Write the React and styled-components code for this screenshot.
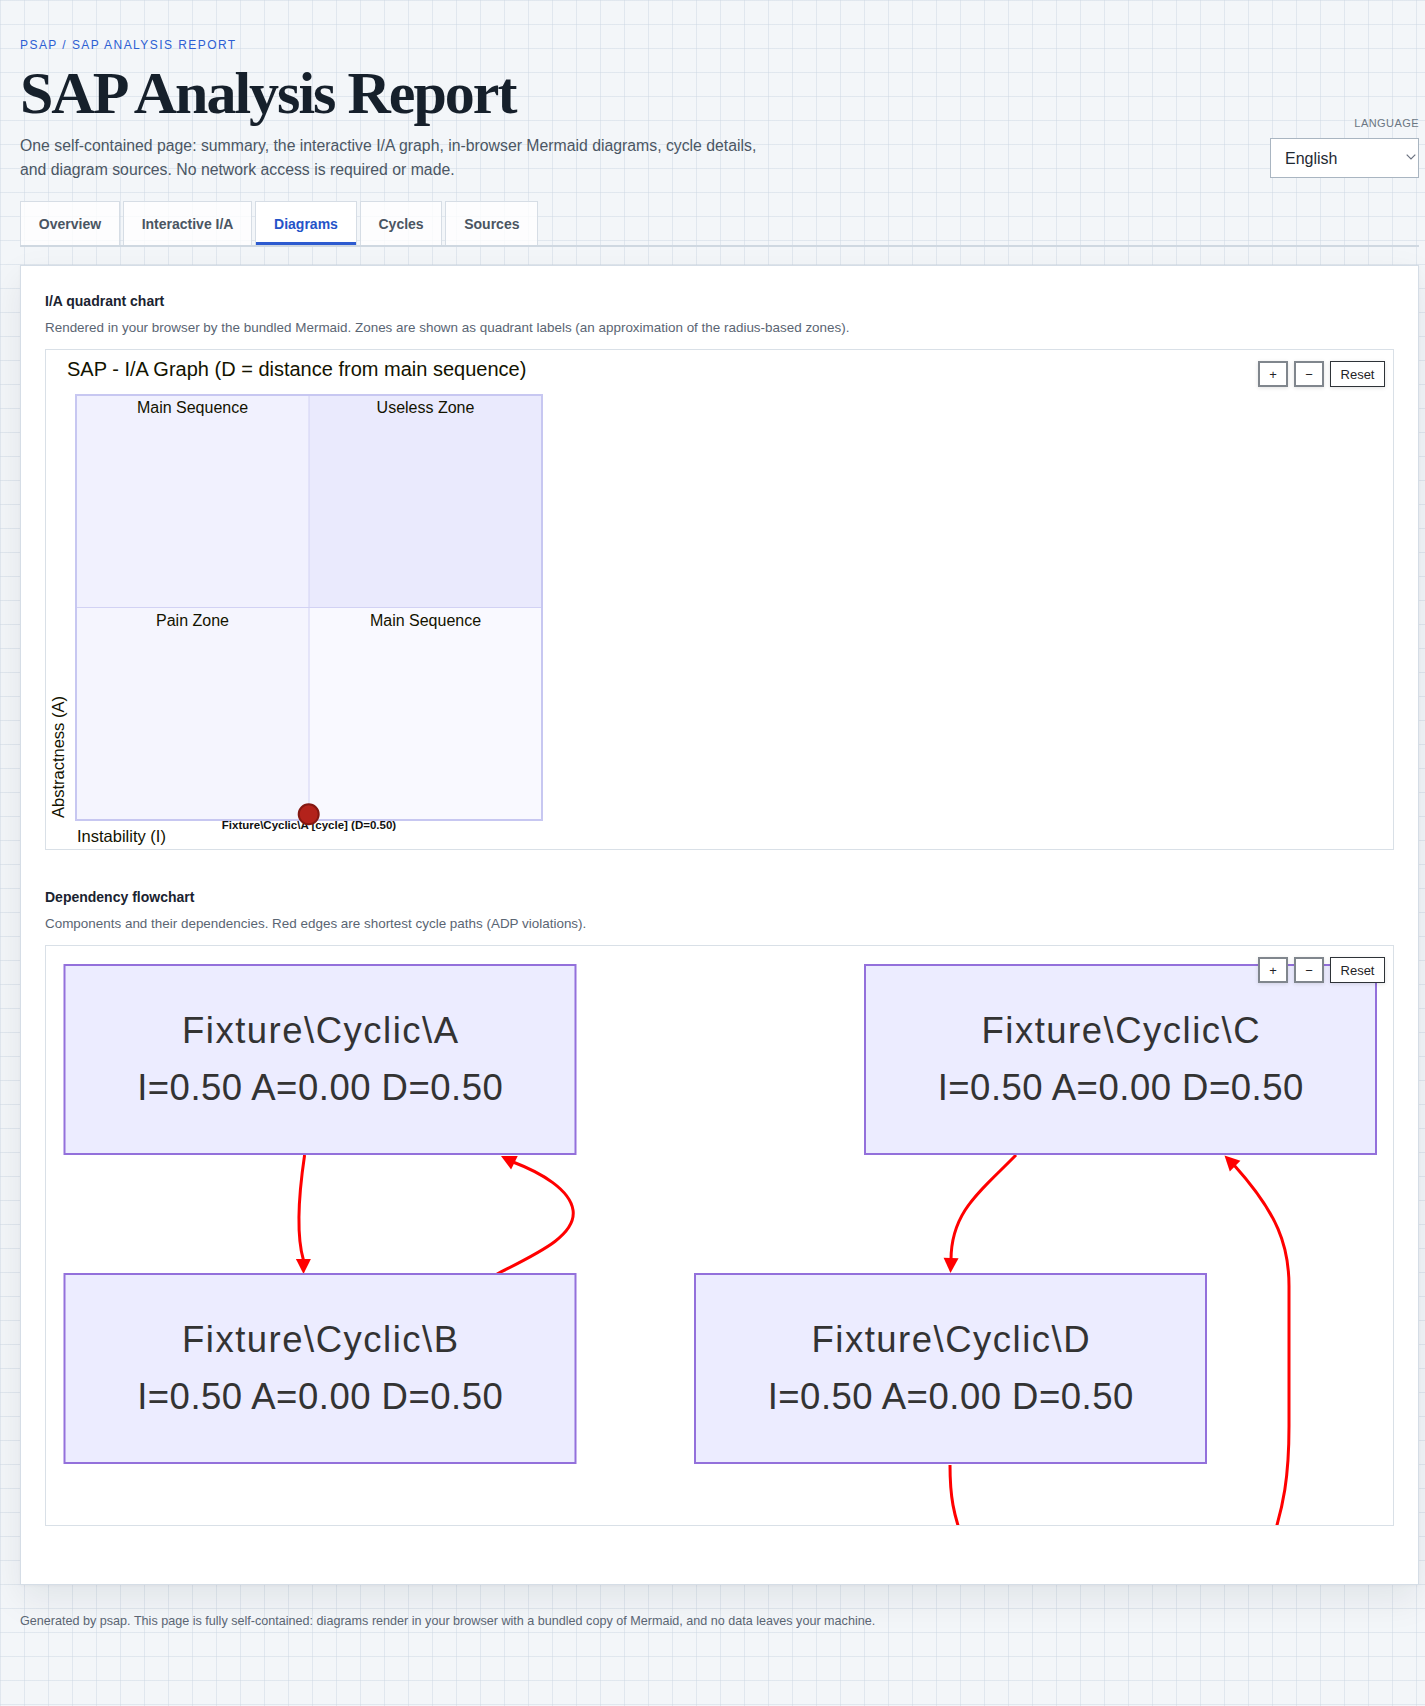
import React from 'react';
import styled, { createGlobalStyle } from 'styled-components';

const SANS = '"Liberation Sans", Arial, Helvetica, sans-serif';
const SERIF = '"Liberation Serif", "Times New Roman", serif';

const GlobalStyle = createGlobalStyle`
  *, *::before, *::after { box-sizing: border-box; }
  html, body { margin: 0; padding: 0; }
  body {
    min-height: 100vh;
    background-color: #f3f6f9;
    background-image:
      linear-gradient(to right, rgba(203, 213, 225, 0.45) 1px, transparent 1px),
      linear-gradient(to bottom, rgba(203, 213, 225, 0.45) 1px, transparent 1px);
    background-size: 24px 24px;
    font-family: ${SANS};
    color: #1b2430;
  }
`;

const Page = styled.div`
  padding: 36px 6px 60px 20px;
`;

const Header = styled.header`
  display: flex;
  justify-content: space-between;
  align-items: flex-end;
  gap: 24px;
`;

const HeaderText = styled.div`
  display: flex;
  flex-direction: column;
`;

const Breadcrumb = styled.div`
  font-size: 12px;
  line-height: 18px;
  letter-spacing: 0.12em;
  text-transform: uppercase;
  color: #2d5fd3;
`;

const Title = styled.h1`
  margin: 6px 0 0;
  font-family: ${SERIF};
  font-weight: 700;
  font-size: 60px;
  line-height: 66px;
  letter-spacing: -2px;
  color: #16202b;
`;

const Subtitle = styled.p`
  margin: 8px 0 0;
  max-width: 762px;
  font-size: 15.8px;
  line-height: 23.5px;
  color: #4b5664;
`;

const LangBlock = styled.div`
  display: flex;
  flex-direction: column;
  align-items: flex-end;
  gap: 8px;
  margin-bottom: 3px;
`;

const LangLabel = styled.label`
  font-size: 11px;
  line-height: 14px;
  letter-spacing: 0.04em;
  text-transform: uppercase;
  color: #6b7683;
`;

const SelectWrap = styled.div`
  position: relative;
  width: 149px;
  height: 40px;
`;

const Select = styled.select`
  appearance: none;
  -webkit-appearance: none;
  width: 100%;
  height: 100%;
  margin: 0;
  padding: 0 20px 0 14px;
  border: 1px solid #a9b5c1;
  border-radius: 0;
  background: #fff;
  font-family: ${SANS};
  font-size: 16px;
  color: #1f2933;
  outline: none;
`;

const Chevron = styled.svg`
  position: absolute;
  right: 3px;
  top: 16px;
  pointer-events: none;
`;

const TabBar = styled.nav`
  display: flex;
  gap: 3px;
  margin-top: 20px;
  border-bottom: 2px solid #cfd8e1;
`;

const Tab = styled.button`
  display: flex;
  align-items: center;
  height: 44px;
  padding: 0 17.8px;
  margin: 0;
  border: 1px solid #d6dde5;
  border-bottom: none;
  border-radius: 0;
  background: ${(p) => (p.$active ? '#ffffff' : 'rgba(255, 255, 255, 0.78)')};
  box-shadow: ${(p) => (p.$active ? 'inset 0 -3px 0 #2d5bd0' : 'none')};
  color: ${(p) => (p.$active ? '#2453c8' : '#4a5562')};
  font-family: ${SANS};
  font-weight: 700;
  font-size: 14px;
  cursor: pointer;
`;

const Card = styled.main`
  margin-top: 18px;
  background: #ffffff;
  border: 1px solid #d5dde6;
  padding: 25px 24px 58px;
  box-shadow: 0 14px 34px rgba(15, 23, 42, 0.08), 0 1px 3px rgba(15, 23, 42, 0.04);
`;

const Section = styled.section`
  & + & {
    margin-top: 37px;
  }
`;

const SectionTitle = styled.h2`
  margin: 0;
  font-size: 14px;
  line-height: 20px;
  font-weight: 700;
  color: #1a2330;
`;

const SectionDesc = styled.p`
  margin: 8px 0 13px;
  font-size: 13.45px;
  line-height: 17px;
  color: #5a6573;
`;

const Frame = styled.div`
  position: relative;
  height: ${(p) => p.$h}px;
  border: 1px solid #d9e0e7;
  background: #ffffff;
  overflow: hidden;
`;

const ZoomControls = styled.div`
  position: absolute;
  top: 11px;
  right: 8px;
  z-index: 2;
  display: flex;
  gap: 6px;
`;

const ZoomButton = styled.button`
  height: 26px;
  min-width: ${(p) => (p.$wide ? 55 : 30)}px;
  padding: 0 ${(p) => (p.$wide ? 9 : 0)}px;
  margin: 0;
  background: #ffffff;
  border: ${(p) => (p.$wide ? '1.5px solid #2e3338' : '2px solid #80868d')};
  border-radius: 0;
  box-shadow: 0 1px 4px rgba(0, 0, 0, 0.12);
  font-family: ${SANS};
  font-size: 13px;
  color: #1f2327;
  cursor: pointer;
`;

const Footer = styled.footer`
  margin-top: 27px;
  font-size: 12.6px;
  line-height: 18px;
  color: #5b6573;
`;

/* ---------- SVG drawing parts ---------- */

const DiagramSvg = styled.svg`
  display: block;
`;

const ChartTitle = styled.text`
  font-family: ${SANS};
  font-size: 20px;
  fill: #131300;
`;

const QuadRect = styled.rect`
  fill: ${(p) => p.$fill};
`;

const QuadLabel = styled.text`
  font-family: ${SANS};
  font-size: 16px;
  fill: #131300;
  text-anchor: middle;
`;

const InnerLine = styled.line`
  stroke: #d2d2f4;
  stroke-width: 1;
`;

const OuterBorder = styled.rect`
  fill: none;
  stroke: #c7c7f1;
  stroke-width: 2;
`;

const AxisLabel = styled.text`
  font-family: ${SANS};
  font-size: 16.5px;
  fill: #131300;
`;

const PointLabel = styled.text`
  font-family: ${SANS};
  font-size: 11.5px;
  font-weight: 700;
  fill: #111;
  text-anchor: middle;
`;

const PointDot = styled.circle`
  fill: #b3221b;
  stroke: #841812;
  stroke-width: 2;
`;

const NodeRect = styled.rect`
  fill: #ececff;
  stroke: #9370db;
  stroke-width: 2;
`;

const NodeText = styled.text`
  font-family: ${SANS};
  font-size: 36.5px;
  letter-spacing: ${(p) => p.$spacing}px;
  fill: #333333;
  text-anchor: middle;
`;

const EdgePath = styled.path`
  fill: none;
  stroke: #ff0000;
  stroke-width: 3;
`;

const ArrowHead = styled.polygon`
  fill: #ff0000;
`;

function arrowPoints(tx, ty, fx, fy, len = 15, half = 7.5) {
  const dx = tx - fx;
  const dy = ty - fy;
  const d = Math.hypot(dx, dy) || 1;
  const ux = dx / d;
  const uy = dy / d;
  const bx = tx - ux * len;
  const by = ty - uy * len;
  const px = -uy;
  const py = ux;
  return `${tx},${ty} ${bx + px * half},${by + py * half} ${bx - px * half},${by - py * half}`;
}

const QX = 30;
const QY = 45;
const QW = 466;
const QH = 425;

function QuadrantChart() {
  const hw = QW / 2;
  const hh = QH / 2;
  const quads = [
    { key: 'tl', x: QX, y: QY, fill: '#f1f1fe', label: 'Main Sequence' },
    { key: 'tr', x: QX + hw, y: QY, fill: '#eaeafd', label: 'Useless Zone' },
    { key: 'bl', x: QX, y: QY + hh, fill: '#f5f5fe', label: 'Pain Zone' },
    { key: 'br', x: QX + hw, y: QY + hh, fill: '#f9f9ff', label: 'Main Sequence' },
  ];
  return (
    <DiagramSvg width="540" height="499" viewBox="0 0 540 499">
      <ChartTitle x="21" y="26">SAP - I/A Graph (D = distance from main sequence)</ChartTitle>
      {quads.map((q) => (
        <QuadRect key={q.key} x={q.x} y={q.y} width={hw} height={hh} $fill={q.fill} />
      ))}
      <InnerLine x1={QX + hw} y1={QY} x2={QX + hw} y2={QY + QH} />
      <InnerLine x1={QX} y1={QY + hh} x2={QX + QW} y2={QY + hh} />
      <OuterBorder x={QX} y={QY} width={QW} height={QH} />
      {quads.map((q) => (
        <QuadLabel key={q.key + 'l'} x={q.x + hw / 2} y={q.y + 18}>
          {q.label}
        </QuadLabel>
      ))}
      <AxisLabel transform="translate(18 468) rotate(-90)">Abstractness (A)</AxisLabel>
      <AxisLabel x="31" y="492">Instability (I)</AxisLabel>
      <PointLabel x="263" y="479">{'Fixture\\Cyclic\\A [cycle] (D=0.50)'}</PointLabel>
      <PointDot cx="262.7" cy="464.3" r="10" />
    </DiagramSvg>
  );
}

const NODE_W = 511;
const NODE_H = 189;
const NODES = [
  { id: 'A', x: 18.5, y: 19 },
  { id: 'C', x: 819, y: 19 },
  { id: 'B', x: 18.5, y: 328 },
  { id: 'D', x: 649, y: 328 },
];

const EDGES = [
  { id: 'ab', d: 'M258.6,209 C254,240 249,285 257.4,314', tip: [257.5, 328], from: [257.4, 314] },
  { id: 'ba', d: 'M451,328 C490,308 531,290 527,264 C524,244 496,227 467,216', tip: [455, 210], from: [467, 216] },
  { id: 'cd', d: 'M970,209 C935,245 905,265 905,314', tip: [904.5, 327], from: [905, 314] },
  { id: 'dc1', d: 'M904,519 C904,550 907,568 919,600' },
  {
    id: 'dc2',
    d: 'M1224.5,600 C1238,560 1243,530 1243,480 L1243,340 C1243,300 1232,268 1188,219',
    tip: [1178.5, 209.5],
    from: [1188, 219],
  },
];

function Flowchart() {
  return (
    <DiagramSvg width="1400" height="579" viewBox="0 0 1400 579">
      {EDGES.map((e) => (
        <g key={e.id}>
          <EdgePath d={e.d} />
          {e.tip && <ArrowHead points={arrowPoints(e.tip[0], e.tip[1], e.from[0], e.from[1])} />}
        </g>
      ))}
      {NODES.map((n) => (
        <g key={n.id}>
          <NodeRect x={n.x} y={n.y} width={NODE_W} height={NODE_H} />
          <NodeText x={n.x + NODE_W / 2 + 0.75} y={n.y + 78} $spacing={1.5}>
            {`Fixture\\Cyclic\\${n.id}`}
          </NodeText>
          <NodeText x={n.x + NODE_W / 2 + 0.25} y={n.y + 135} $spacing={0.5}>
            I=0.50 A=0.00 D=0.50
          </NodeText>
        </g>
      ))}
    </DiagramSvg>
  );
}

function ZoomBar() {
  return (
    <ZoomControls>
      <ZoomButton type="button" aria-label="Zoom in">+</ZoomButton>
      <ZoomButton type="button" aria-label="Zoom out">−</ZoomButton>
      <ZoomButton type="button" $wide>Reset</ZoomButton>
    </ZoomControls>
  );
}

const TABS = ['Overview', 'Interactive I/A', 'Diagrams', 'Cycles', 'Sources'];

export default function App() {
  return (
    <>
      <GlobalStyle />
      <Page>
        <Header>
          <HeaderText>
            <Breadcrumb>psap / SAP analysis report</Breadcrumb>
            <Title>SAP Analysis Report</Title>
            <Subtitle>
              One self-contained page: summary, the interactive I/A graph, in-browser Mermaid diagrams, cycle
              details, and diagram sources. No network access is required or made.
            </Subtitle>
          </HeaderText>
          <LangBlock>
            <LangLabel htmlFor="lang">Language</LangLabel>
            <SelectWrap>
              <Select id="lang" defaultValue="en">
                <option value="en">English</option>
              </Select>
              <Chevron width="10" height="6" viewBox="0 0 10 6">
                <path d="M0.7 0.7 L5 5 L9.3 0.7" fill="none" stroke="#6b7280" strokeWidth="1.2" />
              </Chevron>
            </SelectWrap>
          </LangBlock>
        </Header>

        <TabBar>
          {TABS.map((t) => (
            <Tab key={t} type="button" $active={t === 'Diagrams'}>
              {t}
            </Tab>
          ))}
        </TabBar>

        <Card>
          <Section>
            <SectionTitle>I/A quadrant chart</SectionTitle>
            <SectionDesc>
              Rendered in your browser by the bundled Mermaid. Zones are shown as quadrant labels (an approximation of
              the radius-based zones).
            </SectionDesc>
            <Frame $h={501}>
              <ZoomBar />
              <QuadrantChart />
            </Frame>
          </Section>
          <Section>
            <SectionTitle>Dependency flowchart</SectionTitle>
            <SectionDesc>
              Components and their dependencies. Red edges are shortest cycle paths (ADP violations).
            </SectionDesc>
            <Frame $h={581}>
              <ZoomBar />
              <Flowchart />
            </Frame>
          </Section>
        </Card>

        <Footer>
          Generated by psap. This page is fully self-contained: diagrams render in your browser with a bundled copy of
          Mermaid, and no data leaves your machine.
        </Footer>
      </Page>
    </>
  );
}
